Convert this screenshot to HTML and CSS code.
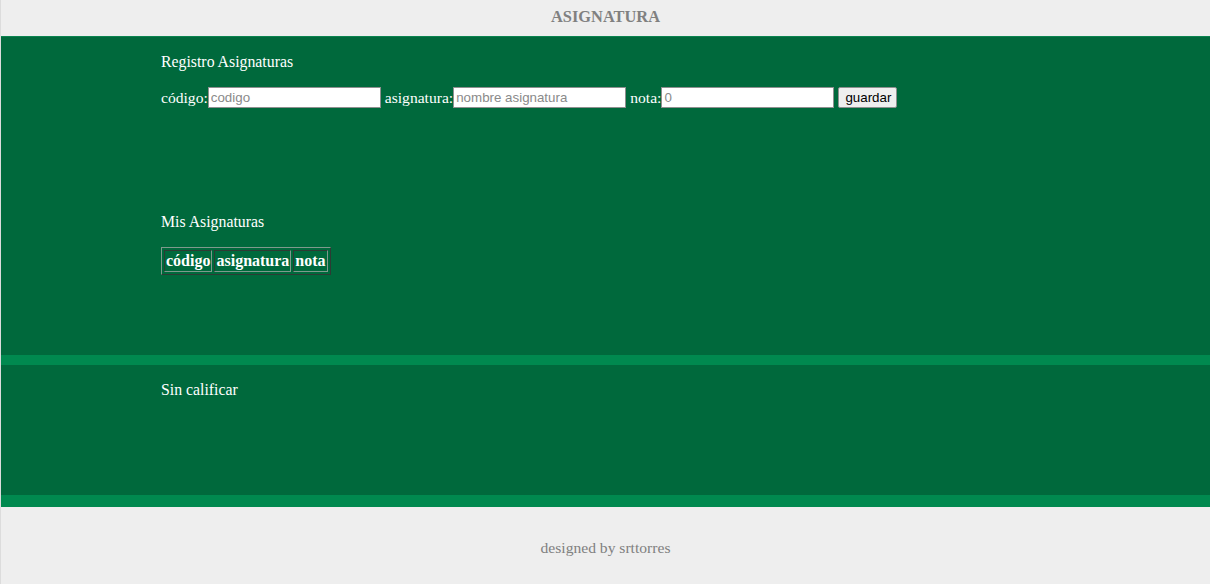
FILE: index.html
```html
<!DOCTYPE html>
<html lang="es">
<head>
<meta charset="utf-8">
<title>Asignatura</title>
<link rel="stylesheet" href="styles.css">
</head>
<body>
<div class="page">
  <header class="top">
    <h1 class="title">ASIGNATURA</h1>
  </header>
  <main class="main">
    <section class="block registro">
      <div class="inner">
        <p class="label wide">Registro Asignaturas</p>
        <form class="form">
          <label>código:<input type="text" placeholder="codigo"></label>
          <label>asignatura:<input type="text" placeholder="nombre asignatura"></label>
          <label>nota:<input type="text" placeholder="0"></label>
          <button type="button" class="btn">guardar</button>
        </form>
      </div>
    </section>
    <section class="block lista">
      <div class="inner">
        <p class="label wide">Mis Asignaturas</p>
        <table class="tabla">
          <tr><th>código</th><th>asignatura</th><th>nota</th></tr>
        </table>
      </div>
    </section>
  </main>
  <div class="stripe s1"></div>
  <section class="main block sin">
    <div class="inner">
      <p class="label wide">Sin calificar</p>
    </div>
  </section>
  <div class="stripe s2"></div>
  <footer class="foot">designed by srttorres</footer>
</div>
</body>
</html>
```

FILE: styles.css
```css
html, body {
  margin: 0;
  padding: 0;
  background: #eeeeee;
  font-family: "Liberation Serif", "Times New Roman", serif;
  font-size: 15.6px;
}
.page {
  border-left: 1px solid #dcdcdc;
  height: 584px;
  overflow: hidden;
}
.top {
  height: 36px;
  display: flex;
  align-items: center;
  justify-content: center;
}
.title {
  margin: 0;
  font-size: 16.4px;
  font-weight: bold;
  color: #808080;
  line-height: 18px;
  padding-bottom: 2px;
}
.main {
  background: #00693c;
  color: #ffffff;
}
main.main {
  border-top: 1px solid #0b8450;
}
.block {
  display: flow-root;
}
.inner {
  padding-left: 160px;
}
.registro { height: 160px; }
.lista { height: 158px; }
.sin { height: 130px; }
.label {
  margin: 16px 0;
  line-height: 18px;
}
.wide {
  font-size: 15.8px;
}
.form {
  margin: 16px 0;
  display: flex;
  align-items: center;
  gap: 4px;
  height: 21px;
}
.form label {
  display: flex;
  align-items: center;
}
.form input {
  box-sizing: border-box;
  width: 173px;
  height: 21px;
  margin: 0;
  border: 1px solid #8f8f8f;
  padding: 1px 2px;
  font-family: "Liberation Sans", Arial, sans-serif;
  font-size: 13.33px;
  color: #000;
  background: #fff;
}
.form input::placeholder {
  color: #8a8a8a;
}
.btn {
  box-sizing: border-box;
  height: 21px;
  width: 59px;
  margin: 0;
  padding: 1px 6px;
  border: 1px solid #8f8f8f;
  border-radius: 2px;
  background: #efefef;
  font-family: "Liberation Sans", Arial, sans-serif;
  font-size: 13.33px;
  color: #000;
}
.tabla {
  border: 1px solid;
  border-color: #7f9a8d #2e3b34 #2e3b34 #7f9a8d;
  border-spacing: 2px;
}
.tabla th {
  border: 1px solid;
  border-color: #2e3b34 #7f9a8d #7f9a8d #2e3b34;
  padding: 1px;
  font-size: 16px;
  font-weight: bold;
  line-height: 18px;
  color: #ffffff;
}
.stripe {
  background: #00894f;
}
.s1 { height: 10px; }
.s2 { height: 12px; }
.foot {
  height: 77px;
  box-sizing: border-box;
  padding-top: 32px;
  line-height: 18px;
  text-align: center;
  color: #808080;
}
```
